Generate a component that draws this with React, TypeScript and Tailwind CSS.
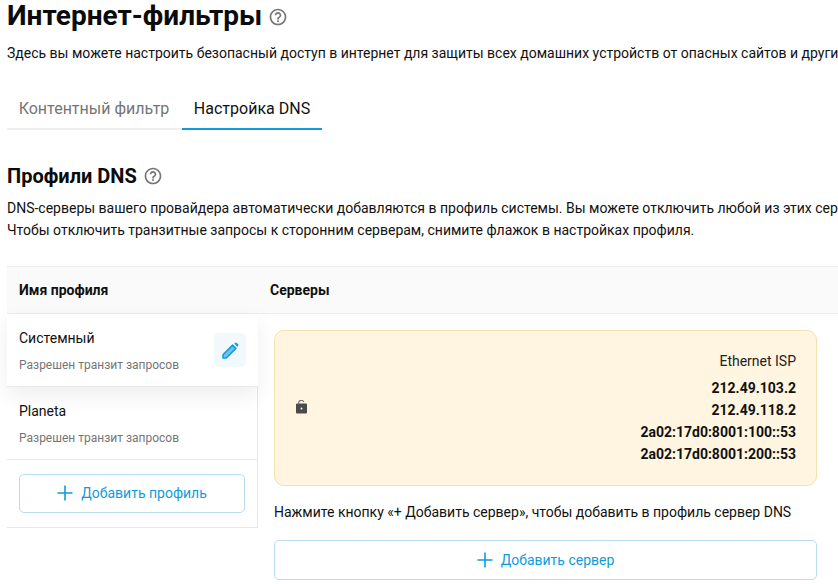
import { MdHelpOutline } from "react-icons/md";

function Plus() {
  return (
    <svg width="16" height="16" viewBox="0 0 16 16" className="shrink-0">
      <path d="M8 0.5V15.5M0.5 8H15.5" stroke="#0f9bdc" strokeWidth="1.6" fill="none" />
    </svg>
  );
}

function AddButton({ label, className }: { label: string; className: string }) {
  return (
    <button className={`flex items-center justify-center gap-2 rounded-[5px] border border-[#b9dcf2] bg-white text-sm text-[#0f9bdc] ${className}`}>
      <Plus />
      <span>{label}</span>
    </button>
  );
}

function Row({ name, shadow, edit }: { name: string; shadow?: boolean; edit?: boolean }) {
  return (
    <div className={`relative flex h-[73px] items-start justify-between border-b border-[#e8e8e8] px-3 pt-[14px] ${shadow ? "z-10 w-[251px] bg-white shadow-[0_8px_20px_rgba(0,0,0,0.07)]" : ""}`}>
      <div>
        <div className="text-sm leading-5 text-[#111]">{name}</div>
        <div className="mt-[9px] text-xs leading-4 text-[#757575]">Разрешен транзит запросов</div>
      </div>
      {edit && (
        <div className="mt-[5px] flex h-[34px] w-8 items-center justify-center rounded-[5px] bg-[#f2f9fd]">
          <svg width="17" height="17" viewBox="0 0 17 17">
            <path d="M1 16V12.7L10.6 3.1L13.9 6.4L4.3 16Z" fill="#6fc3ea" stroke="#0f9bdc" strokeWidth="1.5" strokeLinejoin="round" />
            <path d="M12.3 1.6L13 .9a1.2 1.2 0 0 1 1.7 0l1.4 1.4a1.2 1.2 0 0 1 0 1.7l-.7.7Z" fill="#0f9bdc" />
          </svg>
        </div>
      )}
    </div>
  );
}

export default function App() {
  return (
    <div className="h-[584px] w-[838px] overflow-hidden whitespace-nowrap bg-white font-['Roboto',sans-serif] text-[#111]">
      <div className="pl-[7px]">
        <div className="flex h-8 items-center gap-[6px]">
          <h1 className="text-[28px] font-bold leading-9 text-[#0b0b0b]">Интернет-фильтры</h1>
          <MdHelpOutline className="mt-[2px] text-[20px] text-[#757575]" />
        </div>
        <p className="mt-[10px] text-sm leading-[22px]">
          Здесь вы можете настроить безопасный доступ в интернет для защиты всех домашних устройств от опасных сайтов и других угроз
        </p>
        <div className="mt-[26px] flex h-[40px]">
          <div className="flex w-[175px] items-center justify-center border-b-2 border-[#eeeeee] pr-px text-base text-[#757575]">
            Контентный фильтр
          </div>
          <div className="flex w-[140px] items-center justify-center border-b-2 border-[#0f9bdc] text-base text-[#111]">
            Настройка DNS
          </div>
        </div>
        <div className="mt-[32px] flex h-7 items-center gap-[6px]">
          <h2 className="text-xl font-bold text-[#0b0b0b]">Профили DNS</h2>
          <MdHelpOutline className="text-[20px] text-[#757575]" />
        </div>
        <p className="mt-[7px] text-sm leading-[22px]">
          DNS-серверы вашего провайдера автоматически добавляются в профиль системы. Вы можете отключить любой из этих серверов
          <br />
          Чтобы отключить транзитные запросы к сторонним серверам, снимите флажок в настройках профиля.
        </p>
        <div className="mt-[25px] flex h-[48px] items-center border-y border-[#ececec] bg-[#fafafa] text-sm font-bold">
          <div className="w-[263px] pl-3">Имя профиля</div>
          <div>Серверы</div>
        </div>
        <div className="flex">
          <div className="h-[214px] w-[251px] border-r border-b border-[#e8e8e8]">
            <Row name="Системный" shadow edit />
            <Row name="Planeta" />
            <div className="px-3 pt-[14px]">
              <AddButton label="Добавить профиль" className="h-[39px] w-[226px] pb-px" />
            </div>
          </div>
          <div className="ml-[16px] w-[543px] pt-4">
            <div className="flex h-[156px] items-center justify-between rounded-[10px] border border-[#f5e1ae] bg-[#fff5e0] pl-5 pr-5">
              <svg width="14" height="14" viewBox="0 0 14 14" className="-mt-[2px]">
                <path d="M3.6 3.5V3a2.7 2.7 0 0 1 5.2-1" fill="none" stroke="#6b6b6b" strokeWidth="1.1" />
                <path fill="#4a4a4a" fillRule="evenodd" d="M2 3.5h9a1 1 0 0 1 1 1v8a1 1 0 0 1-1 1H2a1 1 0 0 1-1-1v-8a1 1 0 0 1 1-1ZM6.5 7.5a1 1 0 1 0 0 2 1 1 0 0 0 0-2Z" />
              </svg>
              <div className="pb-px text-right text-sm leading-[22px]">
                <div className="mb-[5px] text-[#222]">Ethernet ISP</div>
                <div className="font-bold">212.49.103.2</div>
                <div className="font-bold">212.49.118.2</div>
                <div className="font-bold">2a02:17d0:8001:100::53</div>
                <div className="font-bold">2a02:17d0:8001:200::53</div>
              </div>
            </div>
            <p className="mt-[15px] text-sm leading-[22px]">
              Нажмите кнопку «+ Добавить сервер», чтобы добавить в профиль сервер DNS
            </p>
            <AddButton label="Добавить сервер" className="mt-[17px] h-10 w-full" />
          </div>
        </div>
      </div>
    </div>
  );
}
